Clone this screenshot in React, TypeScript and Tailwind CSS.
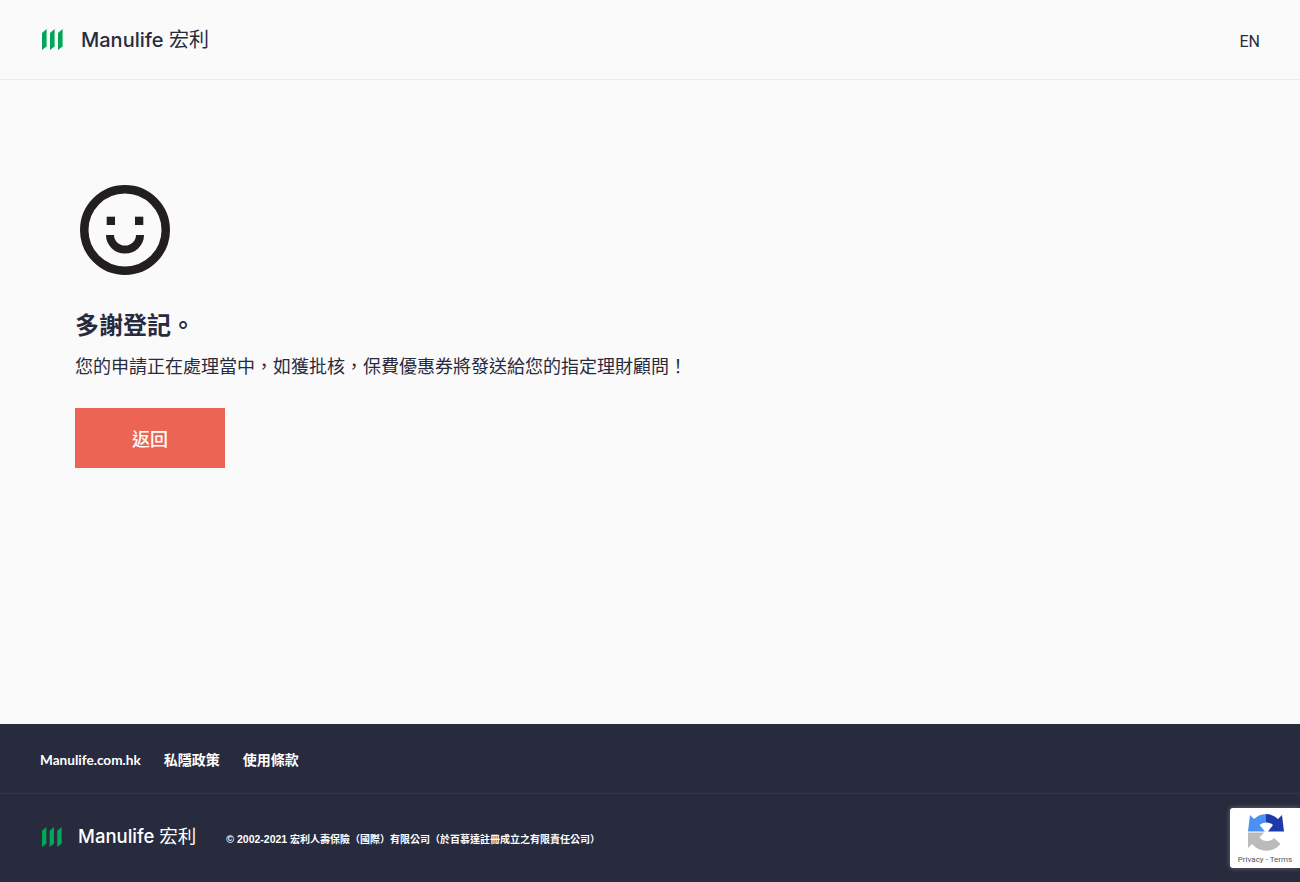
const cjk = "font-['Roboto','Noto_Sans_CJK_TC',sans-serif]"

function LogoMark({ className }: { className: string }) {
  return (
    <svg className={className} viewBox="0 0 21 21" fill="#00a758">
      <path d="M0 4 L4.6 0 V17.5 L0 21 Z" />
      <path d="M8 4 L12.6 0 V17.5 L8 21 Z" />
      <path d="M16 4 L20.6 0 V17.5 L16 21 Z" />
    </svg>
  )
}

function Smiley() {
  return (
    <svg className="w-[90px] h-[90px]" viewBox="0 0 90 90" fill="none" stroke="#231f20">
      <circle cx="45" cy="45" r="40.75" strokeWidth="8.5" />
      <rect x="26.7" y="31.7" width="8.3" height="8.3" fill="#231f20" stroke="none" />
      <rect x="55" y="31.7" width="8.3" height="8.3" fill="#231f20" stroke="none" />
      <path d="M30 50 A15 14.5 0 0 0 60 50" strokeWidth="8" />
    </svg>
  )
}

function RecaptchaBadge() {
  return (
    <div className="absolute right-0 top-[808px] w-[70px] h-[60px] bg-white rounded-l-[3px] shadow-[0_0_5px_rgba(128,128,128,0.8)] flex flex-col items-center">
      <svg className="w-[38px] h-[39px] mt-[5px] ml-[2px]" viewBox="0 0 38 39" fill="none">
        <path d="M3 2 L7 6 A18 18 0 0 1 19 1 V9.5 A9.5 9.5 0 0 0 12.5 12 L18 18.5 H1 Z" fill="#4a90f5" />
        <path d="M19 1 A18 18 0 0 1 31 6 L35 2 L37 18.5 H21 L26 12 A9.5 9.5 0 0 0 19 9.5 Z" fill="#1c3aa9" />
        <path d="M1 19.5 H17 L12.5 24.5 A9.5 9.5 0 0 0 27 25 L33.5 31 A18.5 18.5 0 0 1 5 31 L1 35 Z" fill="#bbbbbb" />
      </svg>
      <div className="mt-[3px] text-[8px] leading-[10px] text-[#555] font-['Roboto',sans-serif] whitespace-nowrap">Privacy - Terms</div>
    </div>
  )
}

export default function App() {
  return (
    <div className={`relative min-h-[882px] flex flex-col bg-[#fafafa] text-[#282b3e] ${cjk}`}>
      <header className="h-20 border-b border-[#ededed] flex items-center justify-between pl-[42px] pr-10">
        <div className="flex items-center">
          <LogoMark className="w-[21px] h-[21px]" />
          <span className="ml-[18px] text-[20px] leading-none font-medium text-[#282b3e] font-['Inter','Noto_Sans_CJK_TC',sans-serif] whitespace-nowrap">
            Manulife <span className="font-normal">宏利</span>
          </span>
        </div>
        <span className="text-[16px] mt-[5px]">EN</span>
      </header>

      <main className="flex-1 pl-[75px] pt-[105px]">
        <div className="pl-[5px]">
          <Smiley />
        </div>
        <h1 className="mt-[31px] text-[24px] leading-[40px] font-bold">多謝登記。</h1>
        <p className="mt-[7px] text-[18px] leading-[27px]">您的申請正在處理當中，如獲批核，保費優惠券將發送給您的指定理財顧問！</p>
        <button className="mt-[28px] w-[150px] h-[60px] pt-[2px] bg-[#ec6453] text-white text-[18px] font-medium flex items-center justify-center">返回</button>
      </main>

      <footer className="h-[158px] bg-[#282b3e] text-white">
        <div className="h-[70px] border-b border-[#34374a] flex items-center gap-[23px] pl-10 pt-[3px] text-[14px] font-bold">
          <span className="text-[13.6px] font-['Lato','Noto_Sans_CJK_TC',sans-serif]">Manulife.com.hk</span>
          <span>私隱政策</span>
          <span>使用條款</span>
        </div>
        <div className="h-[88px] flex items-center pl-[42px] pb-[3px]">
          <LogoMark className="w-[20px] h-[20px]" />
          <span className="ml-[16px] text-[18.5px] leading-none font-medium font-['Inter','Noto_Sans_CJK_TC',sans-serif] whitespace-nowrap">
            Manulife <span className="font-normal">宏利</span>
          </span>
          <span className="ml-[30px] mt-[6px] text-[10px] font-bold font-['Liberation_Sans','Noto_Sans_CJK_TC',sans-serif] whitespace-nowrap">
            <span className="text-[10.5px]">© 2002-2021 </span>宏利人壽保險（國際）有限公司（於百慕達註冊成立之有限責任公司）
          </span>
        </div>
      </footer>

      <RecaptchaBadge />
    </div>
  )
}
